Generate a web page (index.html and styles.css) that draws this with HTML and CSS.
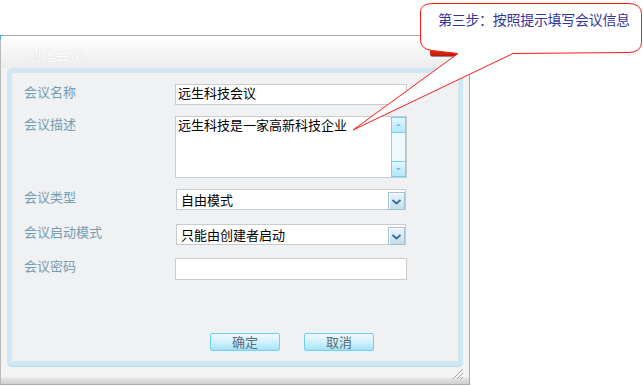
FILE: index.html
```html
<!DOCTYPE html>
<html lang="zh-CN">
<head>
<meta charset="utf-8">
<title>创建会议</title>
<link rel="stylesheet" href="styles.css">
</head>
<body>
<div class="dialog">
  <div class="titlebar">
    <span class="title">创建会议</span>
    <span class="close"></span>
  </div>
  <div class="panel">
    <div class="row">
      <div class="label">会议名称</div>
      <div class="field input">远生科技会议</div>
    </div>
    <div class="row">
      <div class="label">会议描述</div>
      <div class="field textarea">
        <div class="ta-text">远生科技是一家高新科技企业</div>
        <div class="scrollbar">
          <div class="sb-btn"><svg width="13" height="14" viewBox="0 0 13 14"><path d="M4 8 L6.5 5.5 L9 8 Z" fill="#6cc2ec"/></svg></div>
          <div class="sb-track"></div>
          <div class="sb-btn"><svg width="13" height="14" viewBox="0 0 13 14"><path d="M4 6 L6.5 8.5 L9 6 Z" fill="#6cc2ec"/></svg></div>
        </div>
      </div>
    </div>
    <div class="row">
      <div class="label">会议类型</div>
      <div class="field select"><span class="sel-text">自由模式</span><span class="dd"><svg width="15" height="15" viewBox="0 0 15 15"><polyline points="3.5,6 7.5,9.5 11.5,6" fill="none" stroke="#2f6e9c" stroke-width="1.8"/></svg></span></div>
    </div>
    <div class="row row-sel2">
      <div class="label">会议启动模式</div>
      <div class="field select"><span class="sel-text">只能由创建者启动</span><span class="dd"><svg width="15" height="15" viewBox="0 0 15 15"><polyline points="3.5,6 7.5,9.5 11.5,6" fill="none" stroke="#2f6e9c" stroke-width="1.8"/></svg></span></div>
    </div>
    <div class="row row-pwd">
      <div class="label">会议密码</div>
      <div class="field input pwd"></div>
    </div>
    <div class="buttons">
      <div class="btn">确定</div>
      <div class="btn">取消</div>
    </div>
  </div>
  <div class="footer">
    <svg class="grip" width="12" height="12" viewBox="0 0 12 12">
      <g stroke="#a0a0a0" stroke-width="1">
        <line x1="1" y1="11" x2="11" y2="1"/>
        <line x1="5" y1="11" x2="11" y2="5"/>
        <line x1="9" y1="11" x2="11" y2="9"/>
      </g>
      <g stroke="#ffffff" stroke-width="1">
        <line x1="2" y1="11" x2="11" y2="2"/>
        <line x1="6" y1="11" x2="11" y2="6"/>
      </g>
    </svg>
  </div>
</div>

<div class="callout">
  <svg class="callout-shape" width="643" height="140" viewBox="0 0 643 140">
    <path d="M433 3.5 L628 3.5 Q641.5 3.5 641.5 14 L641.5 42 Q641.5 52.5 628 52.5 L513 53.5 L353 130 L458 53.5 L432 50.5 Q420.5 49 420.5 40 L420.5 12 Q420.5 3.5 433 3.5 Z" fill="#ffffff" stroke="#ff1a1a" stroke-width="1"/>
  </svg>
  <span class="callout-text">第三步：按照提示填写会议信息</span>
</div>
</body>
</html>
```

FILE: styles.css
```css
html, body {
  margin: 0;
  padding: 0;
}
body {
  width: 643px;
  height: 386px;
  background: #ffffff;
  font-family: "Noto Sans CJK SC", "Liberation Sans", sans-serif;
  position: relative;
  overflow: hidden;
}

.dialog {
  margin-top: 35px;
  width: 470px;
  height: 350px;
  box-sizing: border-box;
  border: 1px solid #a9a9a9;
  border-left-color: #b9b9b9;
  background: #f3f3f3;
  display: flex;
  flex-direction: column;
  position: relative;
}
.dialog::before {
  content: "";
  position: absolute;
  left: -1px;
  top: -1px;
  width: 0;
  height: 0;
  border-top: 5px solid #4aa6de;
  border-right: 4px solid transparent;
}

.titlebar {
  height: 32px;
  flex: none;
  background: linear-gradient(#ffffff, #ececec);
  display: flex;
  align-items: center;
  padding: 3px 0 0 26px;
  box-sizing: border-box;
  position: relative;
}
.title {
  font-size: 14px;
  line-height: 16px;
  color: #ffffff;
  text-shadow: 0 0 1px rgba(0, 0, 0, 0.16);
}
.close {
  position: absolute;
  left: 429px;
  top: 4px;
  width: 29px;
  height: 16px;
  background: linear-gradient(#f46a4e, #c01800);
  border-bottom: 1px solid #8a8a8a;
  border-radius: 0 0 3px 3px;
}

.panel {
  flex: none;
  height: 298px;
  margin: 0 6px 1px;
  box-sizing: border-box;
  border: 5px solid #cfe8f4;
  border-radius: 5px;
  box-shadow: 0 1px 0 #b4dbee;
  background: #f0f1f3;
  padding: 11px 0 0 12px;
  display: flex;
  flex-direction: column;
  gap: 11px;
}

.row {
  display: flex;
  align-items: flex-start;
}
.row-sel2 {
  margin-top: 3px;
}
.row-pwd {
  margin-top: 2px;
}
.label {
  width: 151px;
  flex: none;
  font-size: 13px;
  line-height: 13px;
  padding-top: 1px;
  color: #749cb3;
}

.field {
  box-sizing: border-box;
  background: #ffffff;
  border: 1px solid #c8cccf;
  font-size: 13px;
  color: #000000;
}
.input {
  width: 232px;
  height: 21px;
  padding: 0 2px;
  line-height: 15px;
}
.input.pwd {
  height: 22px;
}

.textarea {
  width: 232px;
  height: 62px;
  display: flex;
}
.ta-text {
  flex: 1;
  padding: 0 2px;
  line-height: 16px;
}
.scrollbar {
  width: 15px;
  flex: none;
  display: flex;
  flex-direction: column;
}
.sb-btn {
  height: 16px;
  box-sizing: border-box;
  border: 1px solid #74cff6;
  background: linear-gradient(#e4f7ff, #b2e6fc);
  display: flex;
  align-items: center;
  justify-content: center;
}
.sb-btn svg {
  display: block;
}
.sb-track {
  flex: 1;
  border-left: 1px solid #86d6f8;
  border-right: 1px solid #86d6f8;
  background: #eef9ff;
}

.select {
  width: 230px;
  height: 21px;
  margin-left: 1px;
  padding: 1px 0 1px 4px;
  display: flex;
  align-items: center;
  justify-content: space-between;
}
.sel-text {
  line-height: 16px;
}
.dd {
  width: 17px;
  height: 18px;
  box-sizing: border-box;
  border: 1px solid #a0c2d6;
  box-shadow: inset 1px 1px 0 #ffffff;
  background: linear-gradient(#ecf5fa, #c7dcea);
  display: flex;
  align-items: center;
  justify-content: center;
  align-self: flex-start;
  margin-top: 1px;
}
.dd svg {
  display: block;
}

.buttons {
  display: flex;
  gap: 24px;
  margin: 42px 0 0 186px;
}
.btn {
  width: 70px;
  height: 18px;
  box-sizing: border-box;
  border: 1px solid #6ecff7;
  border-radius: 2px;
  background: linear-gradient(#effaff, #d6f2fd 45%, #b6e8fc 80%, #a6e2fb);
  color: #5a6b75;
  font-size: 13px;
  line-height: 16px;
  text-align: center;
}

.footer {
  flex: 1;
  position: relative;
  background: linear-gradient(#f3f3f3 0, #f3f3f3 10px, #e6e6e6 11px, #d0d0d0 100%);
}
.grip {
  position: absolute;
  right: 5px;
  bottom: 4px;
  display: block;
}

.callout {
  position: absolute;
  left: 0;
  top: 0;
  width: 643px;
  height: 140px;
  pointer-events: none;
}
.callout-shape {
  position: absolute;
  left: 0;
  top: 0;
  display: block;
}
.callout-text {
  position: absolute;
  left: 438px;
  top: 12px;
  font-size: 14px;
  line-height: 14px;
  letter-spacing: -0.3px;
  color: #34349a;
  white-space: nowrap;
}
```
